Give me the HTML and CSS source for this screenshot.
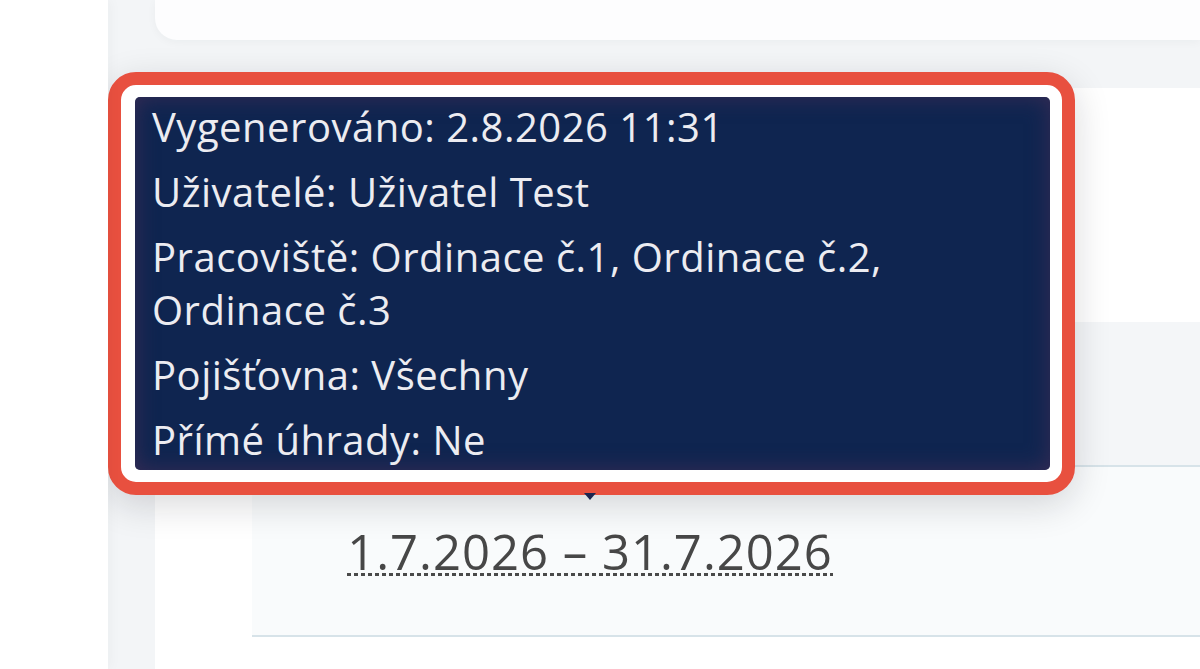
FILE: index.html
```html
<!DOCTYPE html>
<html lang="cs">
<head>
<meta charset="utf-8">
<title>Přehled</title>
<link rel="stylesheet" href="styles.css">
</head>
<body>
<div class="app">
  <aside class="sidebar"></aside>
  <main class="main">
    <div class="topcard"></div>
    <section class="card">
      <div class="table">
        <div class="thead"></div>
        <div class="trow">
          <div class="cell-date"><span class="date">1.7.2026 – 31.7.2026</span></div>
        </div>
      </div>
    </section>
  </main>
</div>

<div class="tooltip">
  <div class="tip-box">
    <p class="tip-line">Vygenerováno: 2.8.2026 11:31</p>
    <p class="tip-line">Uživatelé: Uživatel Test</p>
    <p class="tip-line">Pracoviště: Ordinace č.1, Ordinace č.2, Ordinace č.3</p>
    <p class="tip-line">Pojišťovna: Všechny</p>
    <p class="tip-line">Přímé úhrady: Ne</p>
  </div>
</div>
<div class="tip-arrow"></div>
</body>
</html>
```
FILE: styles.css
```css
html, body {
  margin: 0;
  padding: 0;
  height: 100%;
  overflow: hidden;
  font-family: "Open Sans", "Noto Sans", sans-serif;
}

.app {
  display: flex;
  height: 669px;
}

.sidebar {
  width: 108px;
  flex: none;
  background: #ffffff;
  box-shadow: 2px 0 12px rgba(30, 40, 60, 0.04);
  z-index: 1;
}

.main {
  flex: 1;
  background: #f3f5f7;
  padding-left: 47px;
  display: flex;
  flex-direction: column;
}

.topcard {
  height: 40px;
  background: #fdfdfe;
  border-radius: 0 0 0 22px;
  box-shadow: 0 2px 10px rgba(30, 40, 60, 0.04);
  flex: none;
}

.card {
  margin-top: 48px;
  flex: 1;
  background: #ffffff;
  border-radius: 22px 0 0 0;
  padding-top: 234px;
  padding-left: 97px;
}

.thead {
  height: 143px;
  background: #f4f6f8;
  border-bottom: 2px solid #d7e3e9;
}

.trow {
  height: 168px;
  background: #f9fbfc;
  border-bottom: 2px solid #d7e3e9;
  display: flex;
  align-items: center;
}

.cell-date {
  width: 676px;
  text-align: center;
}

.date {
  font-size: 49px;
  letter-spacing: 1px;
  color: #474747;
  background-image: linear-gradient(to right, #4a4a4a 0 4px, transparent 4px 7px);
  background-size: 7px 3px;
  background-repeat: repeat-x;
  background-position: 0 calc(100% - 8px);
}

.tooltip {
  position: absolute;
  left: 108px;
  top: 72px;
  width: 967px;
  box-sizing: border-box;
  border: 13px solid #e8503f;
  border-radius: 28px;
  padding: 12px 12px 12px 14px;
  background: #ffffff;
  box-shadow: 0 10px 36px rgba(20, 20, 30, 0.16);
}

.tip-box {
  height: 373px;
  box-sizing: border-box;
  background: #0f2550;
  border-radius: 5px;
  padding: 3px 20px 0 17px;
  box-shadow: inset 0 0 22px rgba(70, 45, 85, 0.75);
  display: flex;
  flex-direction: column;
  gap: 12px;
}

.tip-line {
  margin: 0;
  font-size: 40px;
  font-weight: 500;
  letter-spacing: 0.5px;
  line-height: 53px;
  color: #ececf1;
}

.tip-arrow {
  position: absolute;
  left: 584px;
  top: 493px;
  width: 0;
  height: 0;
  border-left: 6px solid transparent;
  border-right: 6px solid transparent;
  border-top: 7px solid #1b2550;
}
```
